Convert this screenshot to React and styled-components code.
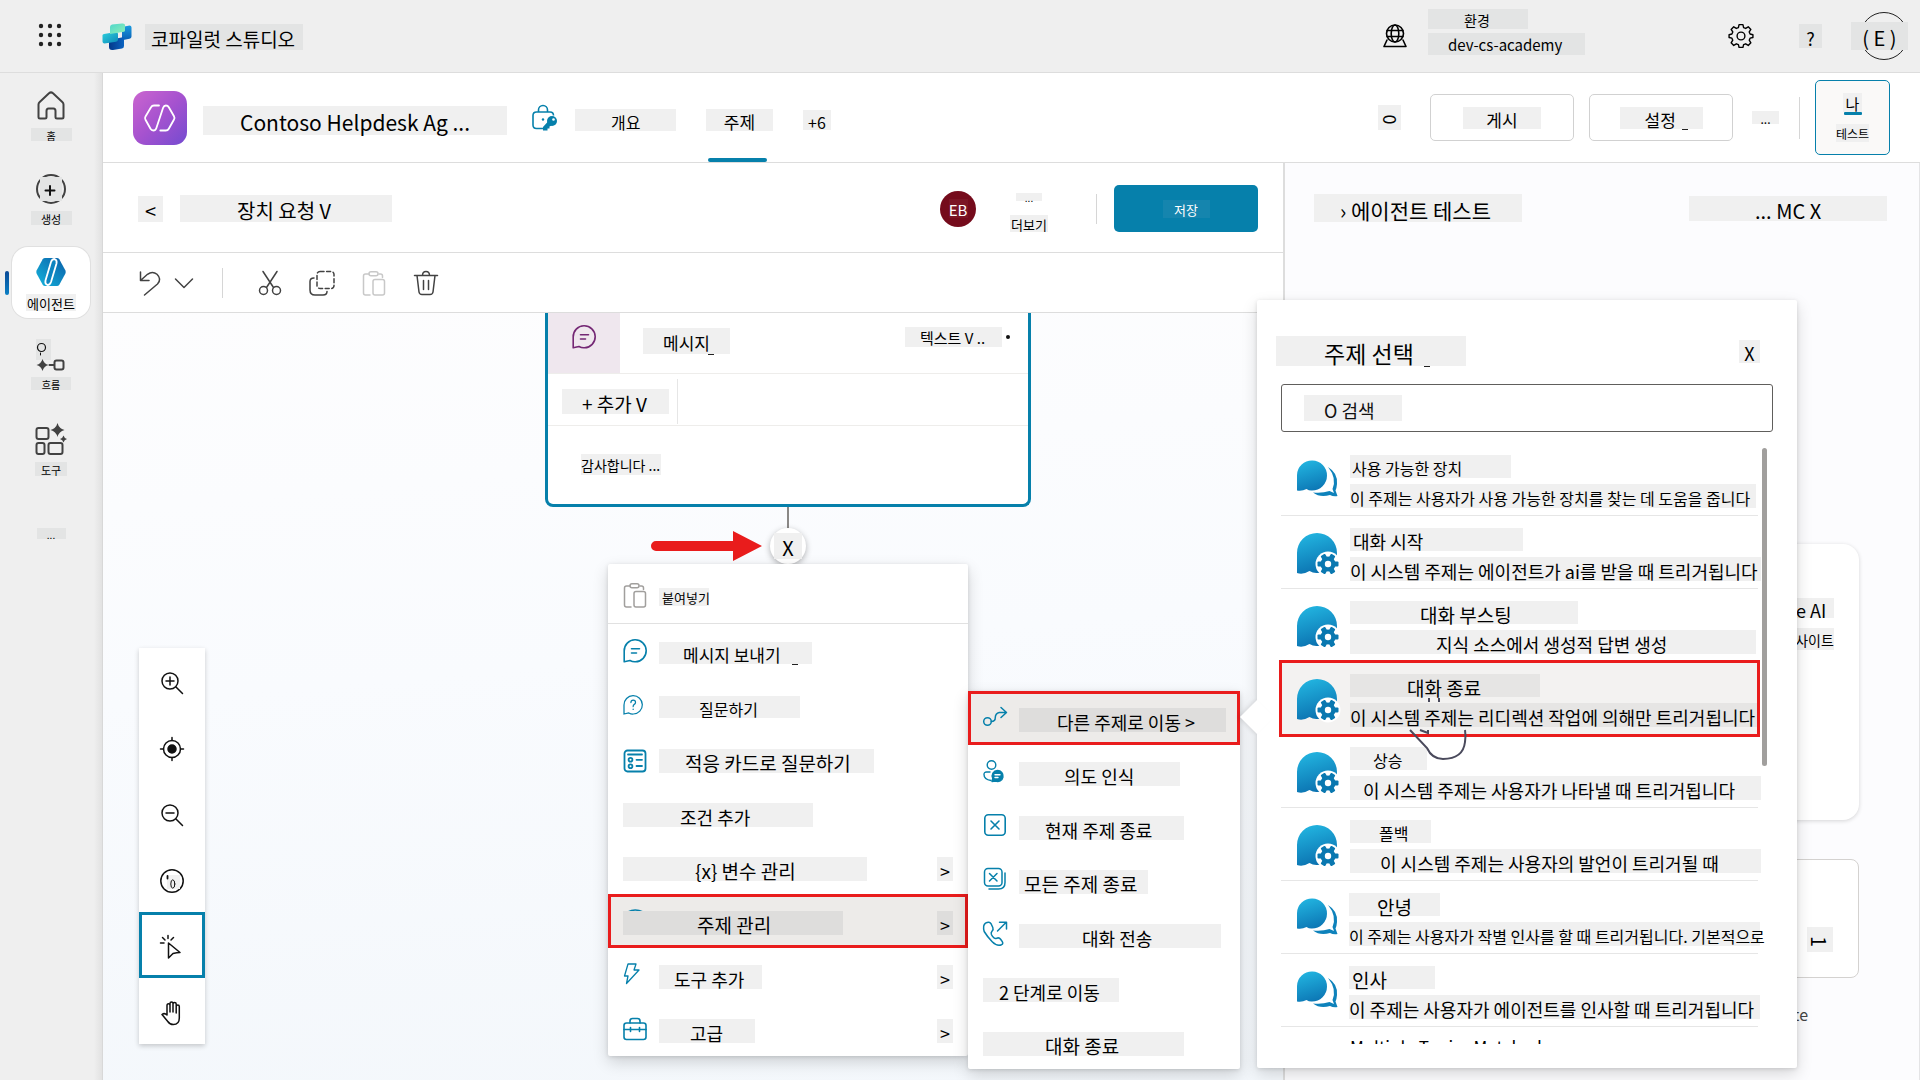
import React from "react";
import styled, { createGlobalStyle, css } from "styled-components";

const C = {
  blue: "#0680ab",
  red: "#e91c1c",
  patch: "#f0f0f0",
  patchDark: "#e3e4e4",
  line: "#dddddd",
  ink: "#424242",
};

const Global = createGlobalStyle`
  * { box-sizing: border-box; }
  html, body, #root { height: 100%; }
  body { margin: 0; background: #f0f0f0; color: #000; overflow: hidden;
    font-family: "Noto Sans CJK KR", "Noto Sans", sans-serif; font-size: 16px; }
  button { font: inherit; color: inherit; background: none; border: 0; padding: 0; margin: 0; cursor: pointer; }
  a { color: inherit; text-decoration: none; }
  h1, h2, p, ul { margin: 0; padding: 0; font-weight: 400; list-style: none; }
  svg { display: block; flex: none; overflow: visible; }
`;

/* Text chip: a tinted block with its text inset from the left */
const Chip = styled.span`
  display: flex;
  flex: none;
  align-items: center;
  position: relative;
  white-space: pre;
  width: ${(p) => p.$w}px;
  height: ${(p) => p.$h || 24}px;
  padding: ${(p) => (p.$fs >= 16 ? 4 : 2)}px 0 0 ${(p) => p.$pl || 0}px;
  justify-content: ${(p) => (p.$center ? "center" : "flex-start")};
  font-size: ${(p) => p.$fs || 16}px;
  line-height: ${(p) => p.$h || 24}px;
  background: ${(p) => p.$bg || C.patch};
`;

const Tick = styled.i`
  position: absolute;
  right: ${(p) => p.$r}px;
  bottom: -1px;
  width: 6px;
  height: 1px;
  background: #222;
`;

const Turned = styled.span`
  display: block;
  transform: rotate(90deg);
`;

const Page = styled.div`
  height: 100%;
  min-height: 100vh;
  display: flex;
  flex-direction: column;
`;

const Header = styled.header`
  flex: none;
  height: 73px;
  border-bottom: 1px solid ${C.line};
  background: #efefef;
  display: flex;
  align-items: center;
  padding: 0 12px 0 38px;
`;
const Brand = styled.a`
  display: flex;
  align-items: center;
  gap: 13px;
  margin: 2px 0 0 38px;
`;
const EnvPicker = styled.button`
  display: flex;
  align-items: center;
  gap: 20px;
  margin-left: auto;
  text-align: left;
`;
const EnvText = styled.span`
  display: flex;
  flex-direction: column;
  gap: 4px;
  padding-bottom: 8px;
`;
const HeaderTools = styled.div`
  display: flex;
  align-items: center;
  margin-left: 143px;
`;
const HelpButton = styled.button`
  margin: 0 29px 0 45px;
`;
const Account = styled.button`
  display: grid;
  justify-items: end;
  align-items: center;
  & > * {
    grid-area: 1 / 1;
  }
`;
const Ring = styled.span`
  width: 48px;
  height: 48px;
  border: 1px solid #222;
  border-radius: 50%;
`;

const Body = styled.div`
  flex: 1;
  min-height: 0;
  display: flex;
`;

const Rail = styled.nav`
  flex: none;
  width: 103px;
  padding: 8px 12px;
  display: flex;
  flex-direction: column;
  gap: 12px;
  border-right: 1px solid #d8d8d8;
  background: linear-gradient(90deg, #efefef 92%, #e2e2e2);
`;
const RailLink = styled.a`
  position: relative;
  width: 78px;
  height: 71px;
  padding-top: ${(p) => (p.$tight ? 32 : 10)}px;
  display: flex;
  flex-direction: column;
  align-items: center;
  gap: 7px;
  border-radius: 16px;
  ${(p) =>
    p.$active &&
    css`
      background: #fff;
      box-shadow: 0 0 0 1px #e0e0e0;
      &::before {
        content: "";
        position: absolute;
        left: -7px;
        top: 24px;
        width: 4px;
        height: 24px;
        border-radius: 2px;
        background: linear-gradient(#0a4a97, #0a7fc4);
      }
    `}
`;

const Main = styled.main`
  flex: 1;
  min-width: 0;
  display: flex;
  flex-direction: column;
  background: #fff;
`;

const AgentBar = styled.div`
  flex: none;
  height: 90px;
  border-bottom: 1px solid ${C.line};
  display: flex;
  align-items: center;
  padding: 0 30px;
`;
const AgentName = styled.h1`
  margin: 6px 25px 0 16px;
`;
const Tabs = styled.nav`
  align-self: stretch;
  display: flex;
  gap: 30px;
  margin-left: 17px;
`;
const Tab = styled.a`
  position: relative;
  display: flex;
  align-items: center;
  padding-top: 4px;
  &::after {
    content: "";
    display: ${(p) => (p.$active ? "block" : "none")};
    position: absolute;
    left: 2px;
    right: 6px;
    bottom: 0;
    height: 4px;
    border-radius: 2px;
    background: ${C.blue};
  }
`;
const BarActions = styled.div`
  margin-left: auto;
  display: flex;
  align-items: center;
`;
const SearchButton = styled.button`
  margin-right: 29px;
`;
const OutlineButton = styled.button`
  width: 144px;
  height: 47px;
  margin-right: 15px;
  border: 1px solid #d1d1d1;
  border-radius: 5px;
  background: #fff;
  display: grid;
  place-items: center;
`;
const DotsButton = styled.button`
  margin-left: 4px;
`;
const Rule = styled.span`
  width: 1px;
  height: ${(p) => p.$h}px;
  margin: 0 ${(p) => p.$after}px 0 ${(p) => p.$before}px;
  background: ${(p) => p.$c || "#d6d6d6"};
`;
const TestButton = styled.button`
  width: 75px;
  height: 75px;
  border: 1px solid ${C.blue};
  border-radius: 5px;
  background: #faf9f8;
  display: flex;
  flex-direction: column;
  align-items: center;
  justify-content: center;
`;
const Underbar = styled.span`
  width: 18px;
  height: 3px;
  margin-bottom: 9px;
  border-radius: 1px;
  background: ${C.blue};
`;

const Work = styled.div`
  position: relative;
  flex: 1;
  min-height: 0;
  display: grid;
  grid-template-columns: minmax(0, 1180fr) minmax(0, 637fr);
`;
const Editor = styled.section`
  min-height: 0;
  display: flex;
  flex-direction: column;
`;
const TopicBar = styled.div`
  flex: none;
  height: 90px;
  border-bottom: 1px solid ${C.line};
  display: flex;
  align-items: center;
  gap: 17px;
  padding: 2px 25px 0 35px;
`;
const Avatar = styled.span`
  width: 36px;
  height: 36px;
  border-radius: 50%;
  background: #750b1c;
  color: #fff;
  display: grid;
  place-items: center;
`;
const MoreButton = styled.button`
  display: flex;
  flex-direction: column;
  align-items: center;
  gap: 14px;
  margin: 7px 0 0 34px;
`;
const SaveButton = styled.button`
  width: 144px;
  height: 47px;
  border-radius: 5px;
  background: ${C.blue};
  color: #fff;
  display: grid;
  place-items: center;
`;
const Toolbar = styled.div`
  flex: none;
  height: 60px;
  border-bottom: 1px solid ${C.line};
  display: flex;
  align-items: center;
  padding-left: 35px;
  color: ${C.ink};
`;
const ToolSet = styled.div`
  display: flex;
  gap: 26px;
`;
const IconButton = styled.button`
  display: grid;
  place-items: center;
  width: ${(p) => p.$w || 26}px;
  height: 30px;
  color: ${(p) => p.$c || "inherit"};
`;

const Canvas = styled.div`
  position: relative;
  flex: 1;
  min-height: 0;
  overflow: hidden;
  background: linear-gradient(175deg, #fdfdfe, #f9fbfe 45%, #f3f7fb);
`;
const MessageNode = styled.article`
  position: absolute;
  left: 442px;
  top: 0;
  width: 486px;
  height: 194px;
  border: 3px solid ${C.blue};
  border-top: 0;
  border-radius: 0 0 8px 8px;
  background: #fff;
`;
const NodeHead = styled.div`
  display: flex;
  height: 61px;
  border-bottom: 1px solid #eeedeb;
`;
const NodeIcon = styled.span`
  width: 72px;
  padding: 12px 0 0 24px;
  background: #efe7ee;
  color: #742774;
`;
const NodeTitle = styled.div`
  flex: 1;
  display: flex;
  justify-content: space-between;
  padding: 15px 18px 0 23px;
`;
const NodeKind = styled.button`
  display: flex;
  align-items: center;
  gap: 4px;
  height: 18px;
  &::after {
    content: "";
    width: 4px;
    height: 4px;
    border-radius: 50%;
    background: #111;
  }
`;
const NodeTools = styled.div`
  display: flex;
  align-items: center;
  height: 52px;
  padding: 4px 0 0 14px;
  border-bottom: 1px solid #eeedeb;
`;
const NodeText = styled.div`
  padding: 28px 33px;
`;
const Connector = styled.span`
  position: absolute;
  left: 684px;
  top: 194px;
  width: 2px;
  height: 24px;
  background: #8a8886;
`;
const PlusButton = styled.button`
  position: absolute;
  left: 667px;
  top: 215px;
  width: 36px;
  height: 36px;
  border-radius: 50%;
  background: #fff;
  box-shadow: 0 2px 6px rgba(0, 0, 0, 0.3);
  display: grid;
  place-items: center;
`;
const ArrowMark = styled.svg`
  position: absolute;
  left: 548px;
  top: 218px;
`;

const Menu = styled.ul`
  position: absolute;
  left: ${(p) => p.$x}px;
  top: ${(p) => p.$y}px;
  width: ${(p) => p.$w}px;
  border-radius: 2px;
  background: #fff;
  box-shadow: 0 6px 16px rgba(0, 0, 0, 0.16), 0 1px 4px rgba(0, 0, 0, 0.12);
`;
const MenuButton = styled.button`
  position: relative;
  width: 100%;
  height: ${(p) => (p.$first ? 60 : 54)}px;
  padding: ${(p) => (p.$first ? 6 : 4)}px 15px 0;
  border-bottom: ${(p) => (p.$first ? "1px solid #e1e1e1" : "0")};
  display: flex;
  align-items: center;
  color: #000;
  ${(p) =>
    p.$on &&
    css`
      background: #edebe9;
      box-shadow: inset 0 0 0 3px ${C.red};
    `}
`;
const MenuIcon = styled.span`
  flex: none;
  width: 24px;
  height: 24px;
  margin: 0 12px 4px 0;
  display: grid;
  place-items: center start;
  color: ${(p) => (p.$muted ? "#a19f9d" : C.blue)};
`;
const MenuArrow = styled.span`
  margin-left: auto;
`;
const PeekArc = styled.svg`
  position: absolute;
  left: 19px;
  top: 15px;
`;

const ZoomBar = styled.div`
  position: absolute;
  left: 36px;
  bottom: 36px;
  width: 66px;
  background: #fff;
  box-shadow: 0 2px 5px rgba(0, 0, 0, 0.2);
`;
const ZoomButton = styled.button`
  width: 66px;
  height: 66px;
  padding-top: 4px;
  display: grid;
  place-items: center;
  color: #111;
  ${(p) => p.$on && css`box-shadow: inset 0 0 0 3px ${C.blue};`}
`;

const TestPanel = styled.aside`
  min-width: 0;
  border-left: 2px solid ${C.line};
  border-right: 1px solid #e4e4e6;
  background: #fcfcfe;
  display: flex;
  flex-direction: column;
`;
const TestHead = styled.div`
  height: 90px;
  display: flex;
  align-items: center;
  justify-content: space-between;
  padding: 0 32px 0 29px;
`;
const TestBody = styled.div`
  flex: 1;
  display: flex;
  flex-direction: column;
  justify-content: flex-end;
  padding: 0 60px 54px 29px;
`;
const Bubble = styled.div`
  height: 276px;
  margin-bottom: 39px;
  padding: 54px 25px 0;
  border-radius: 16px;
  background: #fff;
  box-shadow: 0 1px 4px rgba(0, 0, 0, 0.16);
  display: flex;
  flex-direction: column;
  align-items: flex-end;
  gap: 10px;
`;
const Composer = styled.div`
  height: 119px;
  margin-bottom: 24px;
  padding: 0 25px 25px 0;
  border: 1px solid #d4d2d0;
  border-radius: 8px;
  background: #fff;
  display: flex;
  align-items: flex-end;
  justify-content: flex-end;
`;
const Footnote = styled.p`
  padding-right: 51px;
  text-align: right;
  font-size: 16px;
  line-height: 24px;
  color: #444;
`;

const Picker = styled.section`
  position: absolute;
  left: 1154px;
  top: 137px;
  width: 540px;
  padding: 36px 24px 24px;
  border-radius: 2px;
  background: #fff;
  box-shadow: 0 6px 16px rgba(0, 0, 0, 0.15), 0 1px 4px rgba(0, 0, 0, 0.12);
  &::before {
    content: "";
    position: absolute;
    left: -12px;
    top: 405px;
    width: 24px;
    height: 24px;
    background: #fff;
    transform: rotate(45deg);
    box-shadow: -2px 2px 4px rgba(0, 0, 0, 0.08);
  }
`;
const PickerHead = styled.div`
  position: relative;
  display: flex;
  justify-content: space-between;
  align-items: center;
  height: 30px;
  margin: 0 13px 18px -5px;
`;
const SearchBox = styled.label`
  position: relative;
  display: flex;
  align-items: center;
  height: 48px;
  padding-left: 22px;
  border: 1px solid #605e5c;
  border-radius: 3px;
`;
const SearchInput = styled.input`
  width: 98px;
  height: 26px;
  padding: 4px 0 0 20px;
  border: 0;
  outline: 0;
  background: ${C.patch};
  font: inherit;
  font-size: 18px;
  &::placeholder {
    color: #111;
    opacity: 1;
  }
`;
const ListFrame = styled.div`
  position: relative;
  display: flex;
  height: 601px;
  margin: 11px 0 0 -4px;
  padding-left: 4px;
  overflow: hidden;
`;
const TopicList = styled.ul`
  width: 477px;
`;
const Thumb = styled.span`
  width: 5px;
  height: 318px;
  margin: 5px 0 0 4px;
  border-radius: 3px;
  background: #a19f9d;
`;
const TopicRow = styled.button`
  position: relative;
  width: 100%;
  height: 73px;
  padding: 12px 0 0 16px;
  border-bottom: 1px solid #e6e6e6;
  display: flex;
  gap: 11px;
  align-items: flex-start;
  text-align: left;
  ${(p) =>
    p.$on &&
    css`
      background: #f3f2f1;
      outline: 3px solid ${C.red};
      outline-offset: -1px;
      z-index: 1;
    `}
`;
const TopicGlyph = styled.span`
  width: 42px;
  padding-top: 5px;
`;
const TopicText = styled.span`
  display: flex;
  flex-direction: column;
  gap: 6px;
  font-size: 17px;
  line-height: 16px;
`;
const HandTail = styled.svg`
  position: absolute;
  left: 131px;
  top: 254px;
  z-index: 2;
`;

/* ---------- icons ---------- */
const S = ({ s = 24, w = 1.5, vb = 24, children, ...r }) => (
  <svg width={s} height={s} viewBox={`0 0 ${vb} ${vb}`} fill="none" stroke="currentColor" strokeWidth={w} strokeLinecap="round" strokeLinejoin="round" aria-hidden="true" {...r}>
    {children}
  </svg>
);

const Waffle = () => (
  <svg width="26" height="26" viewBox="0 0 26 26" fill="#222" aria-hidden="true">
    {[3, 12, 21].map((y) => [3, 12, 21].map((x) => <circle key={x + "-" + y} cx={x} cy={y} r="2.2" />))}
  </svg>
);

const CopilotLogo = () => (
  <svg width="30" height="28" viewBox="0 0 30 28" aria-hidden="true">
    <defs>
      <linearGradient id="lgA" x1="0" y1="0" x2="1" y2="1"><stop offset="0" stopColor="#4fd6cc" /><stop offset="1" stopColor="#8ff0b5" /></linearGradient>
      <linearGradient id="lgB" x1="0" y1="0" x2="0" y2="1"><stop offset="0" stopColor="#1a9be0" /><stop offset="1" stopColor="#0a5fb4" /></linearGradient>
      <linearGradient id="lgC" x1="0" y1="0" x2="1" y2="1"><stop offset="0" stopColor="#2fd0dd" /><stop offset="1" stopColor="#0c87b8" /></linearGradient>
      <linearGradient id="lgD" x1="0" y1="0" x2="1" y2="0"><stop offset="0" stopColor="#04388a" /><stop offset="1" stopColor="#0a63c0" /></linearGradient>
    </defs>
    <path d="M20 4l7.500-1.500q2 0 2 2v9q0 2-2 2.300l-7.500 1.500z" fill="url(#lgB)" />
    <path d="M7 17l15-3v9q0 2-2 2.500l-9 1.500q-4 .5-4-3z" fill="url(#lgD)" />
    <path d="M2 11l12-2q2 0 2 2v5.500q0 2-2 2.300L2.500 20.500q-2 0-2-2v-6q0-1.200 1.500-1.500z" fill="url(#lgC)" />
    <path d="M8 4q0-2 2-2.500L20 .5q3-.3 3 1.500v5.500q0 1-1 1.200L8 11z" fill="url(#lgA)" />
  </svg>
);

const Globe = () => (
  <S s={26} w={1.6} vb={26}>
    <circle cx="13" cy="10.500" r="8.500" /><ellipse cx="13" cy="10.500" rx="3.800" ry="8.500" />
    <path d="M5.200 7.500h15.600M5.200 13.500h15.600M5 17l-3 6.500h22L21 17" />
  </S>
);
const Gear = () => (
  <S s={26} vb={24} w={1.3}>
    <circle cx="12" cy="12" r="3.600" />
    <path d="M10.200 1.500h3.600l.6 2.700 1.900.8 2.400-1.500 2.400 2.400-1.500 2.400.8 1.900 2.600.6v2.600l-2.600.6-.8 1.900 1.500 2.400-2.400 2.400-2.400-1.500-1.900.8-.6 2.500h-3.600l-.6-2.500-1.900-.8-2.400 1.500-2.400-2.400 1.500-2.400-.8-1.900-2.600-.6v-2.600l2.600-.6.8-1.900-1.500-2.400 2.400-2.400 2.400 1.500 1.900-.8z" />
  </S>
);
const AgentTile = () => (
  <svg width="54" height="54" viewBox="0 0 54 54" aria-hidden="true">
    <defs><linearGradient id="tile" x1="0" y1="0" x2="1" y2="1"><stop offset="0" stopColor="#cb65cf" /><stop offset="0.500" stopColor="#a552cf" /><stop offset="1" stopColor="#744bd0" /></linearGradient></defs>
    <rect width="54" height="54" rx="13" fill="url(#tile)" />
    <path d="M26 14.500h-5q-2 0-3 1.800L12.500 25.500q-1 1.700 0 3.300l5 9q1 1.700 2.800 1.700 2.200 0 3-2.300l6.800-20.400q.8-2.300 2.800-2.300 1.900 0 2.900 1.700l5.200 9q1 1.700 0 3.300l-5.200 9.200q-1 1.800-3 1.800h-5.500" fill="none" stroke="#fff" strokeWidth="1.800" strokeLinecap="round" strokeLinejoin="round" />
  </svg>
);
const LockKey = () => (
  <svg width="26" height="27" viewBox="0 0 26 27" fill="none" stroke={C.blue} strokeWidth="1.600" aria-hidden="true">
    <path d="M12 24.500H4.500Q1 24.500 1 21V11.500Q1 8 4.500 8H18q3.500 0 3.500 3.500M6.500 8V6a4.500 4.500 0 0 1 9 0v2" />
    <circle cx="11" cy="15.500" r="1.200" fill={C.blue} stroke="none" />
    <circle cx="20" cy="17" r="5" fill={C.blue} stroke="none" /><circle cx="21.500" cy="15.500" r="1.300" fill="#fff" stroke="none" />
    <path d="M16 17.500l-5 5.500v3.500h4.500V24.500h2v-2l2-1z" fill={C.blue} stroke="none" />
  </svg>
);

const Home = () => (
  <S s={30} vb={30} w={2} color={C.ink}>
    <path d="M2.500 13.500q0-1.500 1.200-2.600L13 2.200q2-1.600 4 0l9.300 8.700q1.200 1.100 1.200 2.600V26q0 1.500-1.500 1.500h-5q-1.500 0-1.500-1.500v-6q0-2.500-2-2.500h-5q-2 0-2 2.500v6q0 1.500-1.500 1.500H4Q2.500 27.500 2.500 26z" />
  </S>
);
const Create = () => (
  <S s={30} vb={30} w={2} color={C.ink}>
    <circle cx="15" cy="15" r="14" />
    <rect x="4" y="3" width="22" height="24" fill={C.patchDark} stroke="none" />
    <path d="M14 12v9M9.500 16.500h9" stroke="#111" />
  </S>
);
const AgentHex = () => (
  <svg width="30" height="30" viewBox="0 0 30 30" aria-hidden="true">
    <defs><linearGradient id="hex" x1="1" y1="0" x2="0" y2="1"><stop offset="0" stopColor="#0a5ea8" /><stop offset="1" stopColor="#14b4dc" /></linearGradient></defs>
    <path d="M9 1h12q1.500 0 2.300 1.300l6 11q.9 1.700 0 3.400l-6 11Q22.500 29 21 29H9q-1.500 0-2.300-1.300l-6-11q-.9-1.700 0-3.400l6-11Q7.500 1 9 1z" fill="url(#hex)" />
    <path d="M18.500 2q-2.500 0-3.500 3L9.500 23.500Q8.700 27 11.500 28q2.500 0 3.500-3l5.500-18.500Q21.300 3 18.500 2z" fill="#0c84c0" stroke="#fff" strokeWidth="1.800" />
  </svg>
);
const Flow = () => (
  <S s={30} vb={30} w={2} color={C.ink}>
    <rect x="0" y="-1" width="15" height="21" fill={C.patchDark} stroke="none" />
    <circle cx="5.500" cy="7.500" r="4" stroke="#111" strokeWidth="1.200" /><path d="M4.500 13v2" stroke="#111" strokeWidth="1" />
    <path d="M6.500 19q1.500 5 6 6-4.500 1-6 6-1.500-5-6-6 4.500-1 6-6z" fill="currentColor" stroke="none" />
    <path d="M13.500 25h4.500" /><rect x="18.500" y="20.500" width="9" height="9" rx="2" />
  </S>
);
const ToolsGrid = () => (
  <S s={32} vb={32} w={2} color={C.ink}>
    <rect x="1.500" y="5" width="12" height="11" rx="2" /><rect x="1.500" y="20" width="8" height="11" rx="2" /><rect x="13.500" y="20" width="14" height="11" rx="2" />
    <path d="M22.500 0q1.500 5.500 7 7-5.500 1.500-7 7-1.500-5.500-7-7 5.500-1.500 7-7zM28.500 12.500q.8 2.800 3.500 3.500-2.700.7-3.500 3.500-.8-2.800-3.500-3.500 2.700-.7 3.500-3.500z" fill="currentColor" stroke="none" />
  </S>
);

const Undo = () => <S><path d="M2.500 1v8.500H11M2.500 9.500L9.500 3.300q5-3.800 9.500 0 5 5 .5 9.700L6.500 24" /></S>;
const ChevronDown = () => <S s={20} vb={20}><path d="M1.500 6l8.500 8.500L18.500 6" /></S>;
const Cut = () => <S><path d="M5 .5l10.500 16M19 .5L8.500 16.500" /><circle cx="5.500" cy="19.500" r="4" /><circle cx="18.500" cy="19.500" r="4" /></S>;
const CopyBox = () => (
  <S s={26} vb={26}>
    <rect x="8" y="1.500" width="17" height="17" rx="3" strokeDasharray="4 2.600" />
    <path d="M5 8q-4 0-4 3.500V20q0 5 5 5h8q4 0 4-3.500" />
  </S>
);
const Paste = () => (
  <S>
    <path d="M7 3H3.500Q1.500 3 1.500 5v17q0 2 2 2H8M17 3h1.500q2 0 2 2v1.500" /><rect x="7" y=".8" width="9" height="4" rx="2" /><rect x="11" y="8.500" width="11.500" height="15.500" rx="2" />
  </S>
);
const Trash = () => <S><path d="M.5 4.500h23M8.500 4.500q0-4 3.500-4t3.500 4M3 4.500l2 16.500q.4 2.500 3 2.500h8q2.600 0 3-2.500l2-16.500M9.500 9.500v9M14.500 9.500v9" /></S>;

const Chat = () => <S w={1.6}><path d="M1.200 22.800V12A11 11 0 1 1 12.500 22.800q-3 .2-5.500-1.300zM8.500 9.800h8M8.500 14h5" /></S>;
const Ask = () => <S s={20} vb={24} w={1.5}><path d="M1.200 22.800V12A11 11 0 1 1 12.500 22.800q-3 .2-5.500-1.300zM9.500 9q0-2.800 2.800-2.800T15 9q0 1.500-1.500 2.300T12.200 14M12.200 17v.3" /></S>;
const CardForm = () => (
  <S w={1.8}><rect x="1.500" y="3.500" width="21" height="21" rx="3" /><path d="M5 7.500h14M13.500 12.800H19M13.500 19H19" /><circle cx="7.500" cy="12.800" r="1.900" /><circle cx="7.500" cy="19.200" r="1.900" /></S>
);
const Bolt = () => <S s={22} vb={22} w={1.3}><path d="M5 0h8l-2 6h5L3.500 19.500 5 12H1.500z" /></S>;
const Case = () => <S w={1.6}><rect x="1" y="6" width="22" height="16.500" rx="2.500" /><path d="M7 6V4q0-2.500 2.500-2.500h5Q17 1.500 17 4v2M1 12.500h22M7.500 10.500v4M16.500 10.500v4" /></S>;
const Route = () => <S w={1.5}><circle cx="4.500" cy="15.500" r="3.800" /><path d="M8.300 15.500q4 0 4-4t4-5H23M18 1.500l5.500 5-5.500 5" /></S>;
const Intent = () => (
  <S s={22} vb={22} w={1.4}><circle cx="8.500" cy="4" r="4.300" /><path d="M7 11H3.500Q1 11 1 13.500 1 18.500 8 19.500" /><path d="M14.500 9.500a5.500 5.500 0 1 1-2 10.600L9 20.500l.8-3a5.500 5.500 0 0 1 4.700-8z" fill="currentColor" /><path d="M12 13.800h5M12 16.500h3" stroke="#fff" /></S>
);
const EndOne = () => <S w={1.6}><rect x="1.800" y=".8" width="20.400" height="20.400" rx="3.500" /><path d="M8 7l8 8M16 7l-8 8" /></S>;
const EndAll = () => <S w={1.5}><rect x="1.500" y=".5" width="17.500" height="17.500" rx="3.500" /><path d="M6.500 5.500l7.500 7.500M14 5.500L6.500 13M22 5v9.500q0 6.500-6.500 6.500H6" /></S>;
const Transfer = () => (
  <S w={1.5}>
    <path d="M2.500 1.200q4-2.500 5.800 1l1.500 3.300q.9 2.200-.8 3.800-1.300 1.400-.6 3.200.9 2 2.600 3.400 1.200.8 2.600.3 2.600-1 4 1l1.700 2.500q1.200 2-.8 3-4.500 1.800-9.300-3T1.200 9.500Q-.5 3.500 2.500 1.200zM14.500 9L23 .5M16.500.2H23.500V7" />
  </S>
);

const ZoomIn = () => <S><circle cx="10" cy="10" r="8" /><path d="M16 16l6.500 6.500M10 6v8M6 10h8" /></S>;
const ZoomOut = () => <S><circle cx="10" cy="10" r="8" /><path d="M16 16l6.500 6.500M6 10h8" /></S>;
const Target = () => <S><circle cx="12" cy="12" r="8.500" /><circle cx="12" cy="12" r="4" fill="currentColor" /><path d="M12 .5v3M12 20.500v3M.5 12h3M20.500 12h3" /></S>;
const ResetView = () => (
  <S><circle cx="12" cy="12" r="11.200" /><rect x="7" y="6" width="13" height="14" fill={C.patch} stroke="none" /><path d="M7.500 7v2.500" strokeWidth="1.800" /><ellipse cx="12.800" cy="15" rx="2" ry="4.200" strokeWidth="1" /></S>
);
const Pointer = () => <S><path d="M8.500 8v15l4.500-4.500q4-1 7-1zM8 .5v3M.5 8h3.500M2.500 2.500L5 5M13.500 2.500L11 5" /></S>;
const Hand = () => <S><path d="M7 12V4.500q0-1.700 1.500-1.700T10 4.500V11 2.500Q10 1 11.500 1T13 2.500V11 3q0-1.500 1.600-1.500T16.200 3v9V5.500Q16.200 4 17.800 4q1.500 0 1.500 1.500V17q0 6.500-6 6.500-3.500 0-5.500-3L2 13.500Q4.500 11.500 7 14z" /></S>;

const TopicBubbles = () => (
  <svg width="41" height="38" viewBox="0 0 41 38" aria-hidden="true">
    <defs><linearGradient id="tb" x1="0.300" y1="0" x2="0.600" y2="1"><stop offset="0" stopColor="#22b4e0" /><stop offset="1" stopColor="#0c76b4" /></linearGradient></defs>
    <path d="M0 30.500V15A15 15 0 1 1 15 30.500q-3 .2-5.500-1.500Q5 31.500 0 30.500z" fill="url(#tb)" />
    <path d="M31 7Q41 13 40 24q-.3 4-1.500 6.500L40.500 36q-4 .8-7.500-1Q23 38 16 32.500q9 1 16.500-1.500l4.500 2-1.500-4Q40 18 31 7z" fill="#0e82bb" />
  </svg>
);
const TopicSystem = () => (
  <svg width="42" height="42" viewBox="0 0 42 42" aria-hidden="true">
    <defs><linearGradient id="ts" x1="0.300" y1="0" x2="0.600" y2="1"><stop offset="0" stopColor="#22b4e0" /><stop offset="1" stopColor="#0a6fae" /></linearGradient></defs>
    <path d="M0 40V20A20 20 0 0 1 40 20q0 20-20 20-4 .2-7.500-2Q6 42 0 40z" fill="url(#ts)" />
    <circle cx="31" cy="31" r="12.500" fill="#fff" />
    <g transform="translate(31 31)" fill="#0a78b0">
      <circle r="7.600" />
      {[0, 60, 120, 180, 240, 300].map((a) => <rect key={a} x="-2.600" y="-10.500" width="5.200" height="6" rx="1" transform={`rotate(${a + 30})`} />)}
      <circle r="3.200" fill="#fff" />
    </g>
  </svg>
);

/* ---------- data ---------- */
const rail = [
  { id: "home", icon: <Home />, text: "홈", w: 41, h: 13, fs: 10 },
  { id: "create", icon: <Create />, text: "생성", w: 41, h: 14, fs: 11 },
  { id: "agents", icon: <AgentHex />, text: "에이전트", w: 50, h: 17, fs: 13, active: true },
  { id: "flows", icon: <Flow />, text: "흐름", w: 40, h: 13, fs: 10 },
  { id: "tools", icon: <ToolsGrid />, text: "도구", w: 32, h: 14, fs: 11 },
  { id: "more", text: "...", w: 29, h: 11, fs: 10 },
];

const menuItems = [
  { icon: <Chat />, text: "메시지 보내기", w: 153, pl: 24, fs: 17, h: 22, tick: 14 },
  { icon: <Ask />, text: "질문하기", w: 141, pl: 40, fs: 16, h: 22 },
  { icon: <CardForm />, text: "적응 카드로 질문하기", w: 215, pl: 26, fs: 19 },
  { text: "조건 추가", w: 190, pl: 57, fs: 18 },
  { text: "{x} 변수 관리", w: 244, pl: 72, fs: 19, more: true },
  { text: "주제 관리", w: 220, pl: 74, fs: 19, more: true, on: true, peek: true },
  { icon: <Bolt />, text: "도구 추가", w: 103, pl: 15, fs: 18, more: true },
  { icon: <Case />, text: "고급", w: 96, pl: 31, fs: 18, more: true },
];

const subItems = [
  { icon: <Route />, text: "다른 주제로 이동 >", w: 207, pl: 38, fs: 18, on: true },
  { icon: <Intent />, text: "의도 인식", w: 161, pl: 45, fs: 18 },
  { icon: <EndOne />, text: "현재 주제 종료", w: 165, pl: 26, fs: 18 },
  { icon: <EndAll />, text: "모든 주제 종료", w: 129, pl: 5, fs: 19 },
  { icon: <Transfer />, text: "대화 전송", w: 202, pl: 63, fs: 18 },
  { text: "2 단계로 이동", w: 136, pl: 16, fs: 18 },
  { text: "대화 종료", w: 201, pl: 62, fs: 19 },
];

const topics = [
  { name: ["사용 가능한 장치", 161, 2, 16], desc: ["이 주제는 사용자가 사용 가능한 장치를 찾는 데 도움을 줍니다", 406, 0, 16] },
  { sys: true, name: ["대화 시작", 173, 3, 18], desc: ["이 시스템 주제는 에이전트가 ai를 받을 때 트리거됩니다", 411, 0, 18] },
  { sys: true, name: ["대화 부스팅", 228, 70, 19], desc: ["지식 소스에서 생성적 답변 생성", 406, 86, 18] },
  { sys: true, on: true, name: ["대화 종료", 190, 57, 19], desc: ["이 시스템 주제는 리디렉션 작업에 의해만 트리거됩니다", 407, 0, 18] },
  { sys: true, name: ["상승", 77, 23, 16], desc: ["이 시스템 주제는 사용자가 나타낼 때 트리거됩니다", 411, 13, 18] },
  { sys: true, name: ["폴백", 81, 29, 16], desc: ["이 시스템 주제는 사용자의 발언이 트리거될 때", 411, 30, 18] },
  { name: ["안녕", 91, 28, 19], desc: ["이 주제는 사용자가 작별 인사를 할 때 트리거됩니다. 기본적으로", 411, 0, 16] },
  { name: ["인사", 86, 3, 19], desc: ["이 주제는 사용자가 에이전트를 인사할 때 트리거됩니다", 411, 0, 18] },
];

function MenuEntry({ it }) {
  const tint = it.on ? "#dedddc" : undefined;
  return (
    <li>
      <MenuButton $on={it.on} type="button">
        {it.peek && (
          <PeekArc width="18" height="4" viewBox="0 0 18 4" fill="none" stroke={C.blue} strokeWidth="1.600" aria-hidden="true"><path d="M1 3q7-4 15 0" /></PeekArc>
        )}
        {it.icon && <MenuIcon>{it.icon}</MenuIcon>}
        <Chip $w={it.w} $pl={it.pl} $fs={it.fs} $h={it.h} $bg={tint}>
          {it.text}
          {it.tick && <Tick $r={it.tick} />}
        </Chip>
        {it.more && <MenuArrow><Chip $w={16} $center $fs={18} $bg={tint}>&gt;</Chip></MenuArrow>}
      </MenuButton>
    </li>
  );
}

export default function App() {
  return (
    <Page>
      <Global />
      <Header>
        <button type="button" aria-label="앱"><Waffle /></button>
        <Brand href="#">
          <CopilotLogo />
          <Chip $w={158} $pl={6} $fs={19} $h={26} $bg={C.patchDark}>코파일럿 스튜디오</Chip>
        </Brand>
        <EnvPicker type="button">
          <Globe />
          <EnvText>
            <Chip $w={100} $pl={36} $fs={14} $h={20} $bg={C.patchDark}>환경</Chip>
            <Chip $w={157} $pl={20} $fs={15} $h={22} $bg={C.patchDark}>dev-cs-academy</Chip>
          </EnvText>
        </EnvPicker>
        <HeaderTools>
          <button type="button" aria-label="설정 열기"><Gear /></button>
          <HelpButton type="button"><Chip $w={23} $center $fs={18} $bg={C.patchDark}>?</Chip></HelpButton>
          <Account type="button">
            <Ring />
            <Chip $w={57} $center $fs={20} $h={28} $bg={C.patchDark}>( E )</Chip>
          </Account>
        </HeaderTools>
      </Header>

      <Body>
        <Rail>
          {rail.map((r) => (
            <RailLink key={r.id} href={"#" + r.id} $active={r.active} $tight={!r.icon}>
              {r.icon}
              <Chip $w={r.w} $h={r.h} $fs={r.fs} $center $bg={r.active ? C.patch : C.patchDark}>{r.text}</Chip>
            </RailLink>
          ))}
        </Rail>

        <Main>
          <AgentBar>
            <AgentTile />
            <AgentName><Chip $w={304} $pl={37} $fs={21} $h={29}>Contoso Helpdesk Ag ...</Chip></AgentName>
            <LockKey />
            <Tabs>
              <Tab href="#overview"><Chip $w={101} $pl={36} $fs={16} $h={22}>개요</Chip></Tab>
              <Tab href="#topics" $active><Chip $w={67} $center $fs={17} $h={22}>주제</Chip></Tab>
              <Tab href="#rest"><Chip $w={28} $center $fs={16} $h={20}>+6</Chip></Tab>
            </Tabs>
            <BarActions>
              <SearchButton type="button">
                <Chip $w={23} $center $fs={18} $h={25}><Turned>0</Turned></Chip>
              </SearchButton>
              <OutlineButton type="button"><Chip $w={78} $center $fs={17} $h={22}>게시</Chip></OutlineButton>
              <OutlineButton type="button"><Chip $w={83} $pl={25} $fs={17} $h={22}>설정<Tick $r={15} /></Chip></OutlineButton>
              <DotsButton type="button"><Chip $w={27} $center $fs={12} $h={13}>...</Chip></DotsButton>
              <Rule $h={42} $before={20} $after={15} />
              <TestButton type="button">
                <Chip $w={19} $center $fs={15} $h={19}>나</Chip>
                <Underbar />
                <Chip $w={33} $center $fs={12} $h={18}>테스트</Chip>
              </TestButton>
            </BarActions>
          </AgentBar>

          <Work>
            <Editor>
              <TopicBar>
                <button type="button"><Chip $w={25} $center $fs={20} $h={26}>&lt;</Chip></button>
                <h2><Chip $w={212} $pl={57} $fs={20} $h={27}>장치 요청 V</Chip></h2>
                <BarActions>
                  <Avatar><Chip $w={19} $center $fs={15} $h={19} $bg="#7b1525">EB</Chip></Avatar>
                  <MoreButton type="button">
                    <Chip $w={26} $center $fs={10} $h={8}>...</Chip>
                    <Chip $w={38} $center $fs={13} $h={17}>더보기</Chip>
                  </MoreButton>
                  <Rule $h={30} $before={48} $after={17} />
                  <SaveButton type="button"><Chip $w={47} $center $fs={13} $h={18} $bg="#1585ae">저장</Chip></SaveButton>
                </BarActions>
              </TopicBar>
              <Toolbar>
                <IconButton type="button" $w={24} aria-label="실행 취소"><Undo /></IconButton>
                <IconButton type="button" $w={44} aria-label="실행 취소 목록"><ChevronDown /></IconButton>
                <Rule $h={30} $before={16} $after={34} />
                <ToolSet>
                  <IconButton type="button" aria-label="잘라내기"><Cut /></IconButton>
                  <IconButton type="button" aria-label="복사"><CopyBox /></IconButton>
                  <IconButton type="button" $c="#c8c8c8" aria-label="붙여넣기"><Paste /></IconButton>
                  <IconButton type="button" aria-label="삭제"><Trash /></IconButton>
                </ToolSet>
              </Toolbar>

              <Canvas>
                <MessageNode>
                  <NodeHead>
                    <NodeIcon><Chat /></NodeIcon>
                    <NodeTitle>
                      <Chip $w={87} $pl={20} $fs={17} $h={26}>메시지<Tick $r={16} /></Chip>
                      <NodeKind type="button"><Chip $w={97} $pl={15} $fs={15} $h={20}>텍스트 V ..</Chip></NodeKind>
                    </NodeTitle>
                  </NodeHead>
                  <NodeTools>
                    <button type="button"><Chip $w={107} $pl={20} $fs={19} $h={25}>+ 추가 V</Chip></button>
                    <Rule $h={45} $before={8} $after={0} $c="#e6e6e6" />
                  </NodeTools>
                  <NodeText><Chip $w={80} $pl={0} $fs={14} $h={21}>감사합니다 ...</Chip></NodeText>
                </MessageNode>
                <Connector />
                <PlusButton type="button"><Chip $w={28} $center $fs={20} $h={26}>X</Chip></PlusButton>
                <ArrowMark width="111" height="30" viewBox="0 0 111 30" aria-hidden="true">
                  <path d="M5 10h77V0l29 15-29 15V20H5a5 5 0 0 1 0-10z" fill={C.red} />
                </ArrowMark>

                <Menu $x={505} $y={251} $w={360}>
                  <li>
                    <MenuButton $first type="button">
                      <MenuIcon $muted><Paste /></MenuIcon>
                      <Chip $w={50} $pl={3} $fs={13} $h={18}>붙여넣기</Chip>
                    </MenuButton>
                  </li>
                  {menuItems.map((it) => <MenuEntry key={it.text} it={it} />)}
                </Menu>
                <Menu $x={865} $y={378} $w={272}>
                  {subItems.map((it) => <MenuEntry key={it.text} it={it} />)}
                </Menu>

                <ZoomBar>
                  <ZoomButton type="button" aria-label="확대"><ZoomIn /></ZoomButton>
                  <ZoomButton type="button" aria-label="가운데"><Target /></ZoomButton>
                  <ZoomButton type="button" aria-label="축소"><ZoomOut /></ZoomButton>
                  <ZoomButton type="button" aria-label="초기화"><ResetView /></ZoomButton>
                  <ZoomButton type="button" $on aria-label="선택"><Pointer /></ZoomButton>
                  <ZoomButton type="button" aria-label="이동"><Hand /></ZoomButton>
                </ZoomBar>
              </Canvas>
            </Editor>

            <TestPanel>
              <TestHead>
                <Chip $w={208} $pl={26} $fs={21} $h={28}>› 에이전트 테스트</Chip>
                <Chip $w={198} $pl={66} $fs={20} $h={25}>... MC X</Chip>
              </TestHead>
              <TestBody>
                <Bubble>
                  <Chip $w={46} $pl={8} $fs={18} $h={20}>e AI</Chip>
                  <Chip $w={39} $center $fs={14} $h={22}>사이트</Chip>
                </Bubble>
                <Composer><Chip $w={26} $center $fs={20} $h={25}><Turned>1</Turned></Chip></Composer>
                <Footnote>te</Footnote>
              </TestBody>
            </TestPanel>

            <Picker>
              <PickerHead>
                <h2><Chip $w={190} $pl={48} $fs={23} $h={30}>주제 선택<Tick $r={36} /></Chip></h2>
                <button type="button"><Chip $w={21} $center $fs={18} $h={23}>X</Chip></button>
              </PickerHead>
              <SearchBox>
                <SearchInput type="text" placeholder="O 검색" aria-label="검색" />
              </SearchBox>
              <ListFrame>
                <TopicList>
                  {topics.map((t) => (
                    <li key={t.name[0]}>
                      <TopicRow type="button" $on={t.on}>
                        <TopicGlyph>{t.sys ? <TopicSystem /> : <TopicBubbles />}</TopicGlyph>
                        <TopicText>
                          <Chip $w={t.name[1]} $pl={t.name[2]} $fs={t.name[3]} $h={23} $bg={t.on ? "#e6e5e4" : undefined}>{t.name[0]}</Chip>
                          <Chip $w={t.desc[1]} $pl={t.desc[2]} $fs={t.desc[3]} $h={24} $bg={t.on ? "#e6e5e4" : undefined}>{t.desc[0]}</Chip>
                        </TopicText>
                      </TopicRow>
                    </li>
                  ))}
                  <li>
                    <TopicRow type="button">
                      <TopicGlyph />
                      <TopicText>Multiple Topics Matched</TopicText>
                    </TopicRow>
                  </li>
                </TopicList>
                <Thumb />
                <HandTail width="60" height="66" viewBox="0 0 60 66" fill="none" stroke="#4a4a5c" strokeWidth="2" aria-hidden="true">
                  <path d="M21 1v4M31 1v4M2 33l17 18q5 11 16 11 20 0 22-17 1-6 0-12M12 33l8 3v-3" />
                </HandTail>
              </ListFrame>
            </Picker>
          </Work>
        </Main>
      </Body>
    </Page>
  );
}
